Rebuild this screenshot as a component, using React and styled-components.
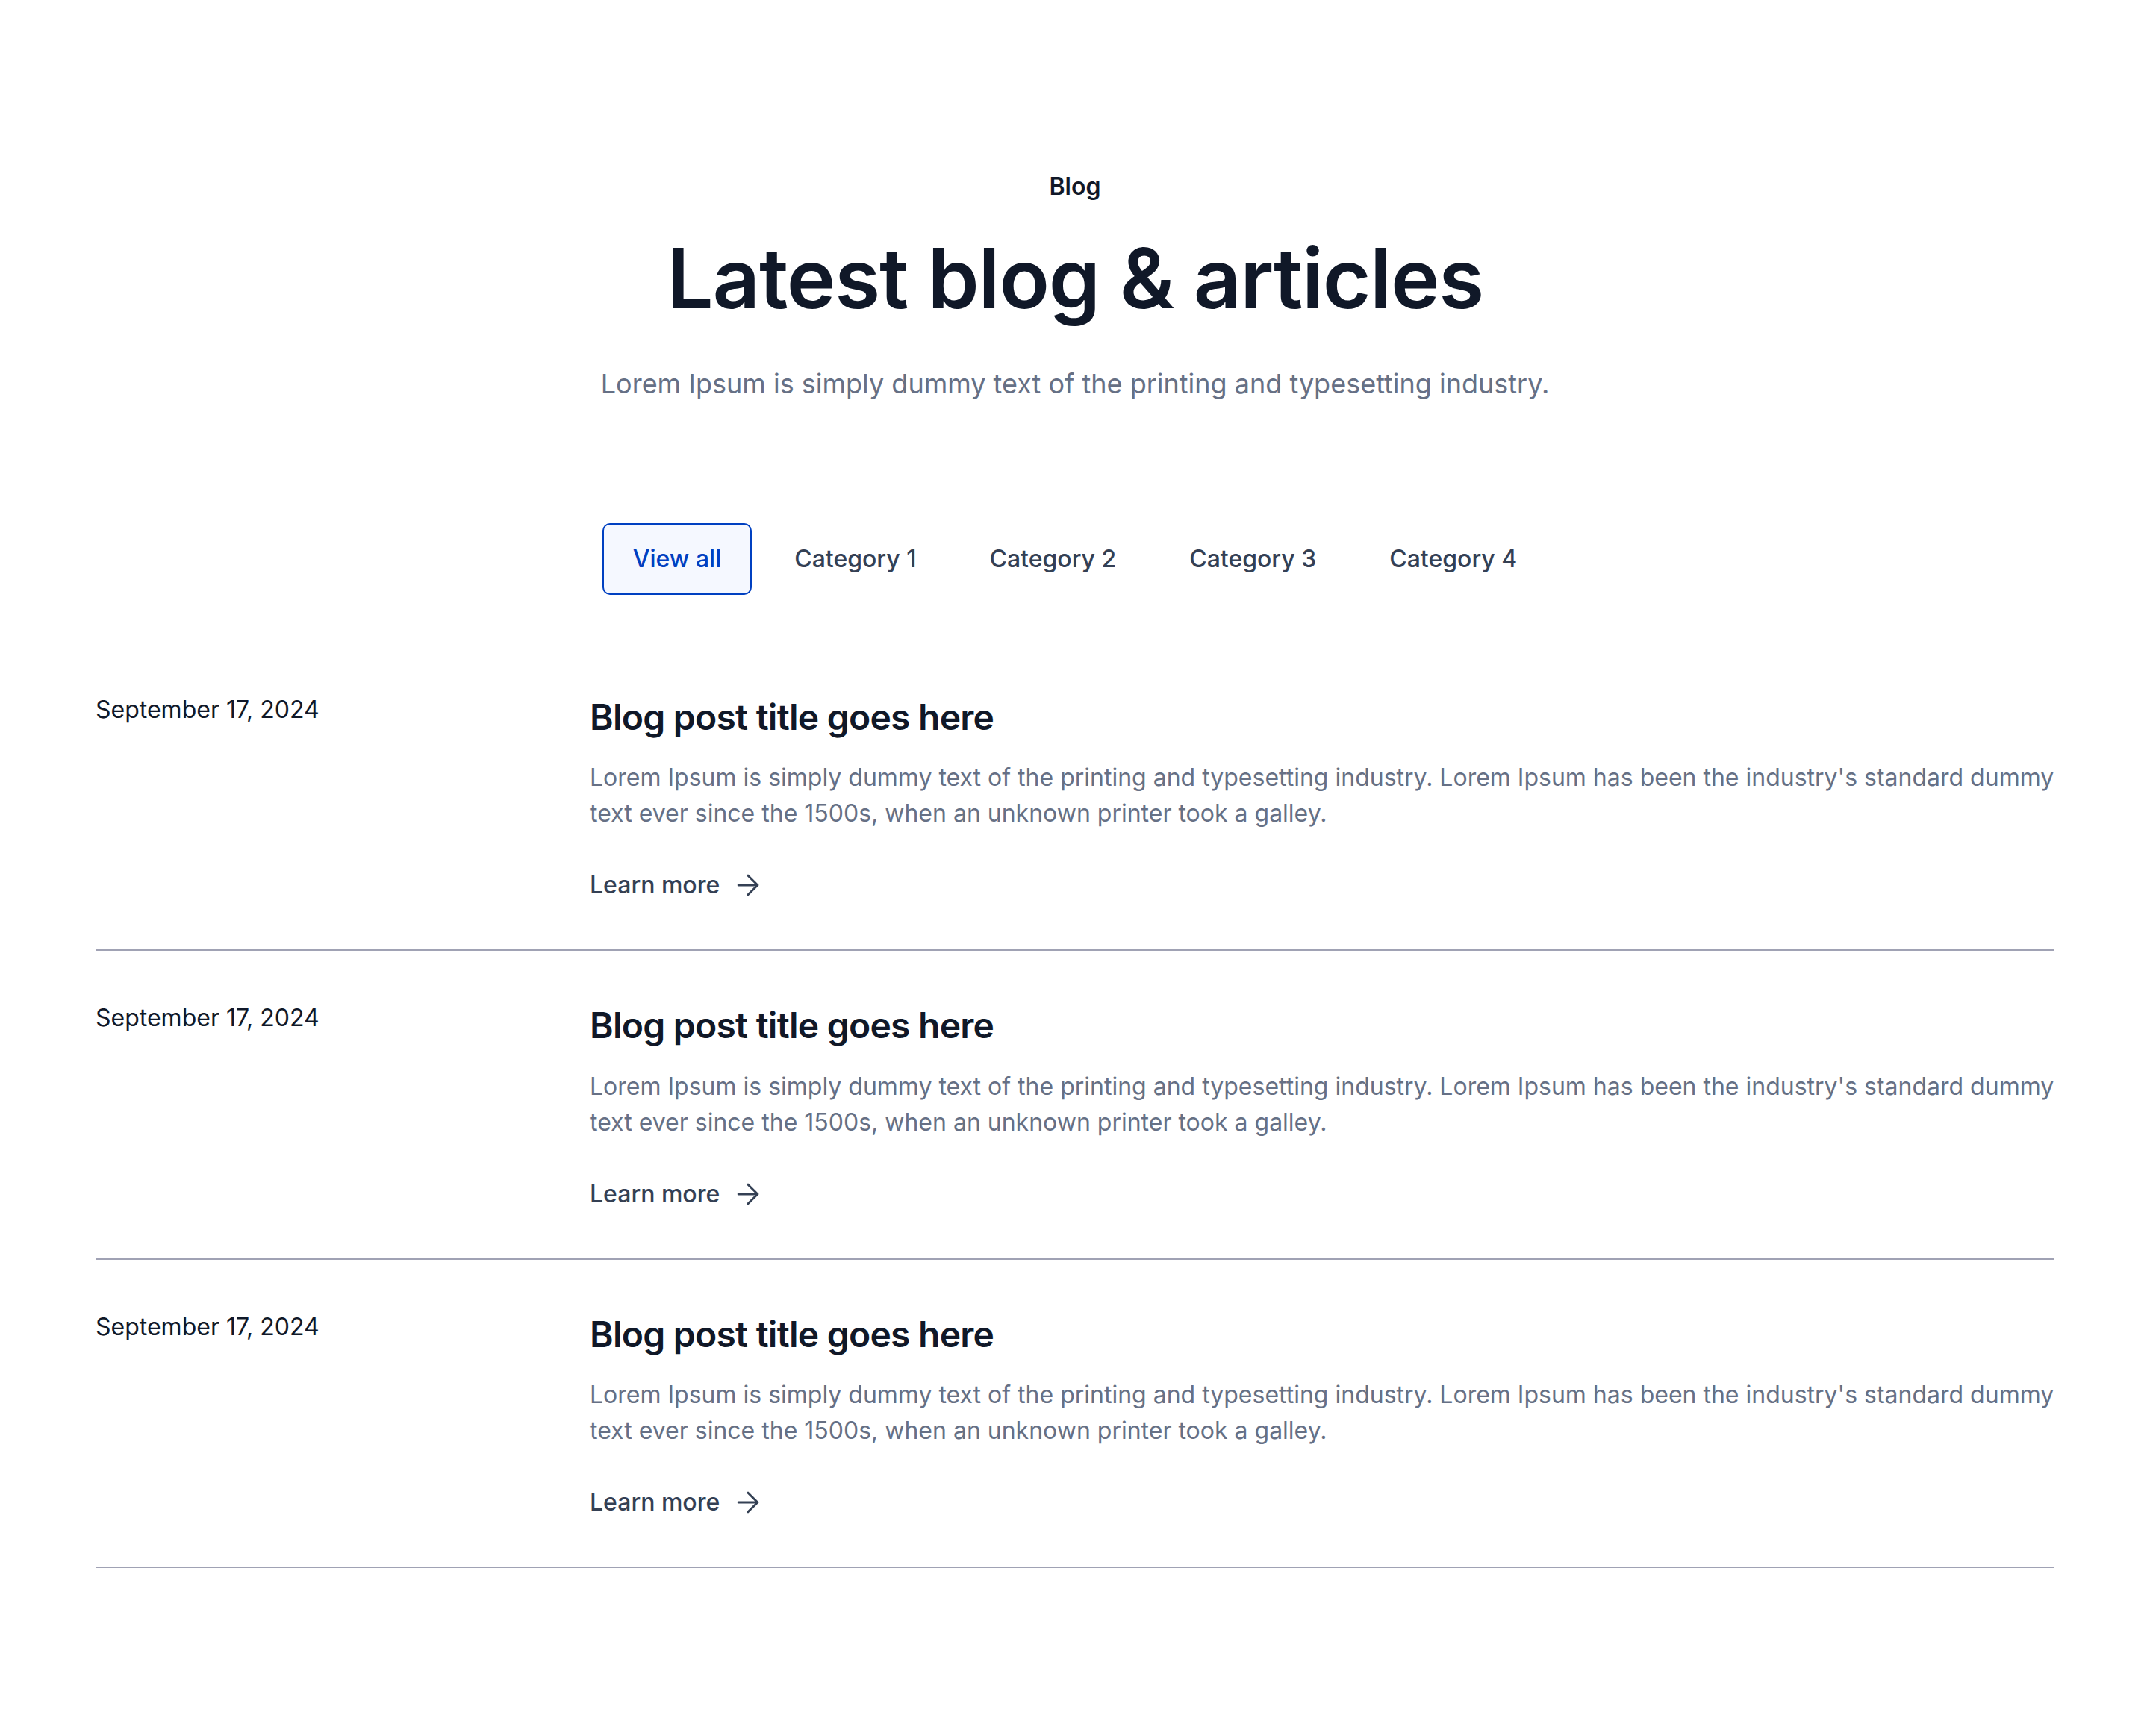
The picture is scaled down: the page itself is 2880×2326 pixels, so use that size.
import React from 'react';
import styled, { createGlobalStyle } from 'styled-components';
import { ArrowRight } from 'lucide-react';

const GlobalStyle = createGlobalStyle`
  body {
    margin: 0;
    background: #ffffff;
    font-family: Inter, "Noto Sans", sans-serif;
    -webkit-font-smoothing: antialiased;
  }
`;

const Section = styled.section`
  padding: 226px 128px 224px;
  background: #ffffff;
`;

const Header = styled.header`
  display: flex;
  flex-direction: column;
  align-items: center;
  text-align: center;
`;

const Tagline = styled.p`
  margin: 0;
  font-size: 32px;
  line-height: 48px;
  font-weight: 600;
  color: #101828;
`;

const Title = styled.h1`
  margin: 32px 0 0;
  font-size: 111px;
  line-height: 1.2;
  font-weight: 600;
  letter-spacing: -1.25px;
  color: #101828;
`;

const Subtitle = styled.p`
  margin: 48px 0 0;
  font-size: 36px;
  line-height: 54px;
  font-weight: 400;
  color: #667085;
`;

const Tabs = styled.nav`
  display: flex;
  justify-content: center;
  gap: 16px;
  margin-top: 160px;
`;

const Tab = styled.button`
  box-sizing: border-box;
  height: 96px;
  padding: 0 39px;
  font-family: inherit;
  font-size: 32px;
  line-height: 48px;
  font-weight: 500;
  color: ${(p) => (p.$active ? '#0040c1' : '#344054')};
  background: ${(p) => (p.$active ? '#f5f8ff' : 'transparent')};
  border: 2px solid ${(p) => (p.$active ? '#0040c1' : 'transparent')};
  border-radius: 10px;
  cursor: pointer;
`;

const List = styled.div`
  margin-top: 64px;
`;

const Row = styled.article`
  display: grid;
  grid-template-columns: 654px 1fr;
  column-gap: 8px;
  padding: 66px 0 62px;
  border-bottom: 2px solid #a0a2b4;
`;

const PostDate = styled.time`
  font-size: 32px;
  line-height: 48px;
  color: #101828;
`;

const PostBody = styled.div`
  display: flex;
  flex-direction: column;
  align-items: flex-start;
`;

const PostTitle = styled.h2`
  margin: 0;
  font-size: 48px;
  line-height: 1.4;
  font-weight: 600;
  letter-spacing: -0.75px;
  color: #101828;
`;

const PostText = styled.p`
  margin: 24px 0 0;
  font-size: 32px;
  line-height: 48px;
  color: #667085;
`;

const LearnMore = styled.a`
  display: inline-flex;
  align-items: center;
  gap: 16px;
  margin-top: 48px;
  font-size: 32px;
  line-height: 48px;
  font-weight: 500;
  color: #344054;
  text-decoration: none;
  cursor: pointer;
`;

const categories = ['View all', 'Category 1', 'Category 2', 'Category 3', 'Category 4'];

const posts = [1, 2, 3].map((id) => ({
  id,
  date: 'September 17, 2024',
  title: 'Blog post title goes here',
  text:
    "Lorem Ipsum is simply dummy text of the printing and typesetting industry. Lorem Ipsum has been the industry's standard dummy text ever since the 1500s, when an unknown printer took a galley.",
}));

const App = () => {
  return (
    <>
      <GlobalStyle />
      <Section>
        <Header>
          <Tagline>Blog</Tagline>
          <Title>Latest blog &amp; articles</Title>
          <Subtitle>Lorem Ipsum is simply dummy text of the printing and typesetting industry.</Subtitle>
        </Header>

        <Tabs>
          {categories.map((c, i) => (
            <Tab key={c} $active={i === 0}>{c}</Tab>
          ))}
        </Tabs>

        <List>
          {posts.map((post) => (
            <Row key={post.id}>
              <PostDate>{post.date}</PostDate>
              <PostBody>
                <PostTitle>{post.title}</PostTitle>
                <PostText>{post.text}</PostText>
                <LearnMore>
                  Learn more <ArrowRight size={44} strokeWidth={1.6} />
                </LearnMore>
              </PostBody>
            </Row>
          ))}
        </List>
      </Section>
    </>
  );
};

export default App;
